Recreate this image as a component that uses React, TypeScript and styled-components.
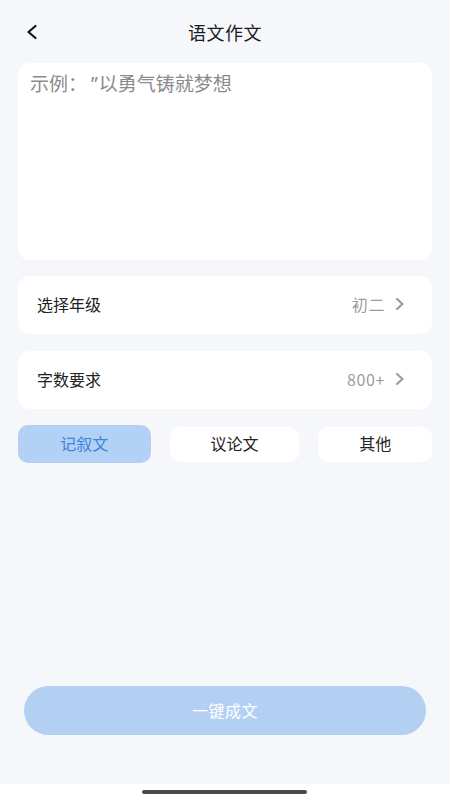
import React, { useState } from "react";
import styled, { createGlobalStyle } from "styled-components";

const Global = createGlobalStyle`
  html, body { margin: 0; padding: 0; background: #f6f7fb; }
  * { box-sizing: border-box; }
  body {
    font-family: "Noto Sans CJK SC", "Noto Sans", sans-serif;
    text-spacing-trim: space-all;
  }
`;

const Page = styled.div`
  width: 450px;
  height: 800px;
  display: flex;
  flex-direction: column;
  background: #f6f7fb;
`;

const Header = styled.header`
  height: 54px;
  padding-top: 10px;
  display: flex;
  align-items: center;
  justify-content: center;
  position: relative;
`;

const BackButton = styled.button`
  position: absolute;
  left: 20px;
  top: 20px;
  width: 24px;
  height: 24px;
  padding: 0;
  border: none;
  background: transparent;
  display: flex;
  align-items: center;
  justify-content: center;
`;

const Title = styled.h1`
  margin: 0;
  font-size: 18px;
  font-weight: 400;
  color: #1b1b1b;
  letter-spacing: 0.5px;
`;

const Main = styled.main`
  flex: 1;
  display: flex;
  flex-direction: column;
  padding: 9px 18px 0;
`;

const TextCard = styled.div`
  height: 197px;
  background: #ffffff;
  border-radius: 12px;
  padding: 9px 12px;
`;

const Placeholder = styled.div`
  font-size: 19px;
  line-height: 22px;
  color: #8a8a8a;
`;

const Quote = styled.span`
  font-family: "Noto Sans", sans-serif;
  margin-left: 4px;
  margin-right: 1px;
`;

const Row = styled.div<{ $mt: number }>`
  margin-top: ${(p) => p.$mt}px;
  height: 58px;
  background: #ffffff;
  border-radius: 12px;
  display: flex;
  align-items: center;
  justify-content: space-between;
  padding: 0 27px 0 19px;
`;

const RowLabel = styled.span`
  font-size: 16px;
  line-height: 20px;
  color: #222222;
  margin-top: -2px;
`;

const RowValue = styled.span`
  display: flex;
  align-items: center;
  gap: 10px;
  font-size: 16px;
  line-height: 20px;
  color: #9b9b9b;
  letter-spacing: 0.6px;
  margin-top: -2px;
`;

const Types = styled.div`
  margin-top: 16px;
  display: grid;
  grid-template-columns: 132fr 129fr 113fr;
  column-gap: 19px;
  align-items: center;
`;

const TypeButton = styled.button<{ $active: boolean }>`
  height: ${(p) => (p.$active ? 38 : 35)}px;
  border: none;
  border-radius: 10px;
  background: ${(p) => (p.$active ? "#b3d1f4" : "#ffffff")};
  color: ${(p) => (p.$active ? "#3a86da" : "#222222")};
  font-family: inherit;
  font-size: 16px;
  line-height: 20px;
  padding: 0 0 3px;
`;

const Spacer = styled.div`
  flex: 1;
`;

const Generate = styled.button`
  margin: 0 6px 49px;
  height: 49px;
  border: none;
  border-radius: 25px;
  background: #b3d0f3;
  color: #ffffff;
  font-family: inherit;
  font-size: 16px;
  letter-spacing: 0.5px;
  padding: 0 0 2px;
`;

const HomeBar = styled.div`
  height: 16px;
  background: #ffffff;
  display: flex;
  align-items: center;
  justify-content: center;
`;

const Indicator = styled.div`
  width: 165px;
  height: 4px;
  border-radius: 2px;
  background: #4a4a4a;
  margin-left: -2px;
`;

const Chevron = () => (
  <svg width="10" height="14" viewBox="0 0 10 14">
    <path d="M2 2 L7.5 7 L2 12" fill="none" stroke="#9b9b9b" strokeWidth="2.2" strokeLinecap="round" strokeLinejoin="round" />
  </svg>
);

const types = ["记叙文", "议论文", "其他"];

export default function App() {
  const [active, setActive] = useState(0);
  return (
    <Page>
      <Global />
      <Header>
        <BackButton aria-label="返回">
          <svg width="14" height="16" viewBox="0 0 14 16">
            <path d="M10.5 2 L3.5 8 L10.5 14" fill="none" stroke="#111" strokeWidth="2.2" strokeLinecap="round" strokeLinejoin="round" />
          </svg>
        </BackButton>
        <Title>语文作文</Title>
      </Header>
      <Main>
        <TextCard>
          <Placeholder>
            示例：<Quote>”</Quote>以勇气铸就梦想
          </Placeholder>
        </TextCard>
        <Row $mt={16}>
          <RowLabel>选择年级</RowLabel>
          <RowValue>
            初二
            <Chevron />
          </RowValue>
        </Row>
        <Row $mt={17}>
          <RowLabel>字数要求</RowLabel>
          <RowValue>
            800+
            <Chevron />
          </RowValue>
        </Row>
        <Types>
          {types.map((t, i) => (
            <TypeButton key={t} $active={i === active} onClick={() => setActive(i)}>
              {t}
            </TypeButton>
          ))}
        </Types>
        <Spacer />
        <Generate>一键成文</Generate>
      </Main>
      <HomeBar>
        <Indicator />
      </HomeBar>
    </Page>
  );
}
